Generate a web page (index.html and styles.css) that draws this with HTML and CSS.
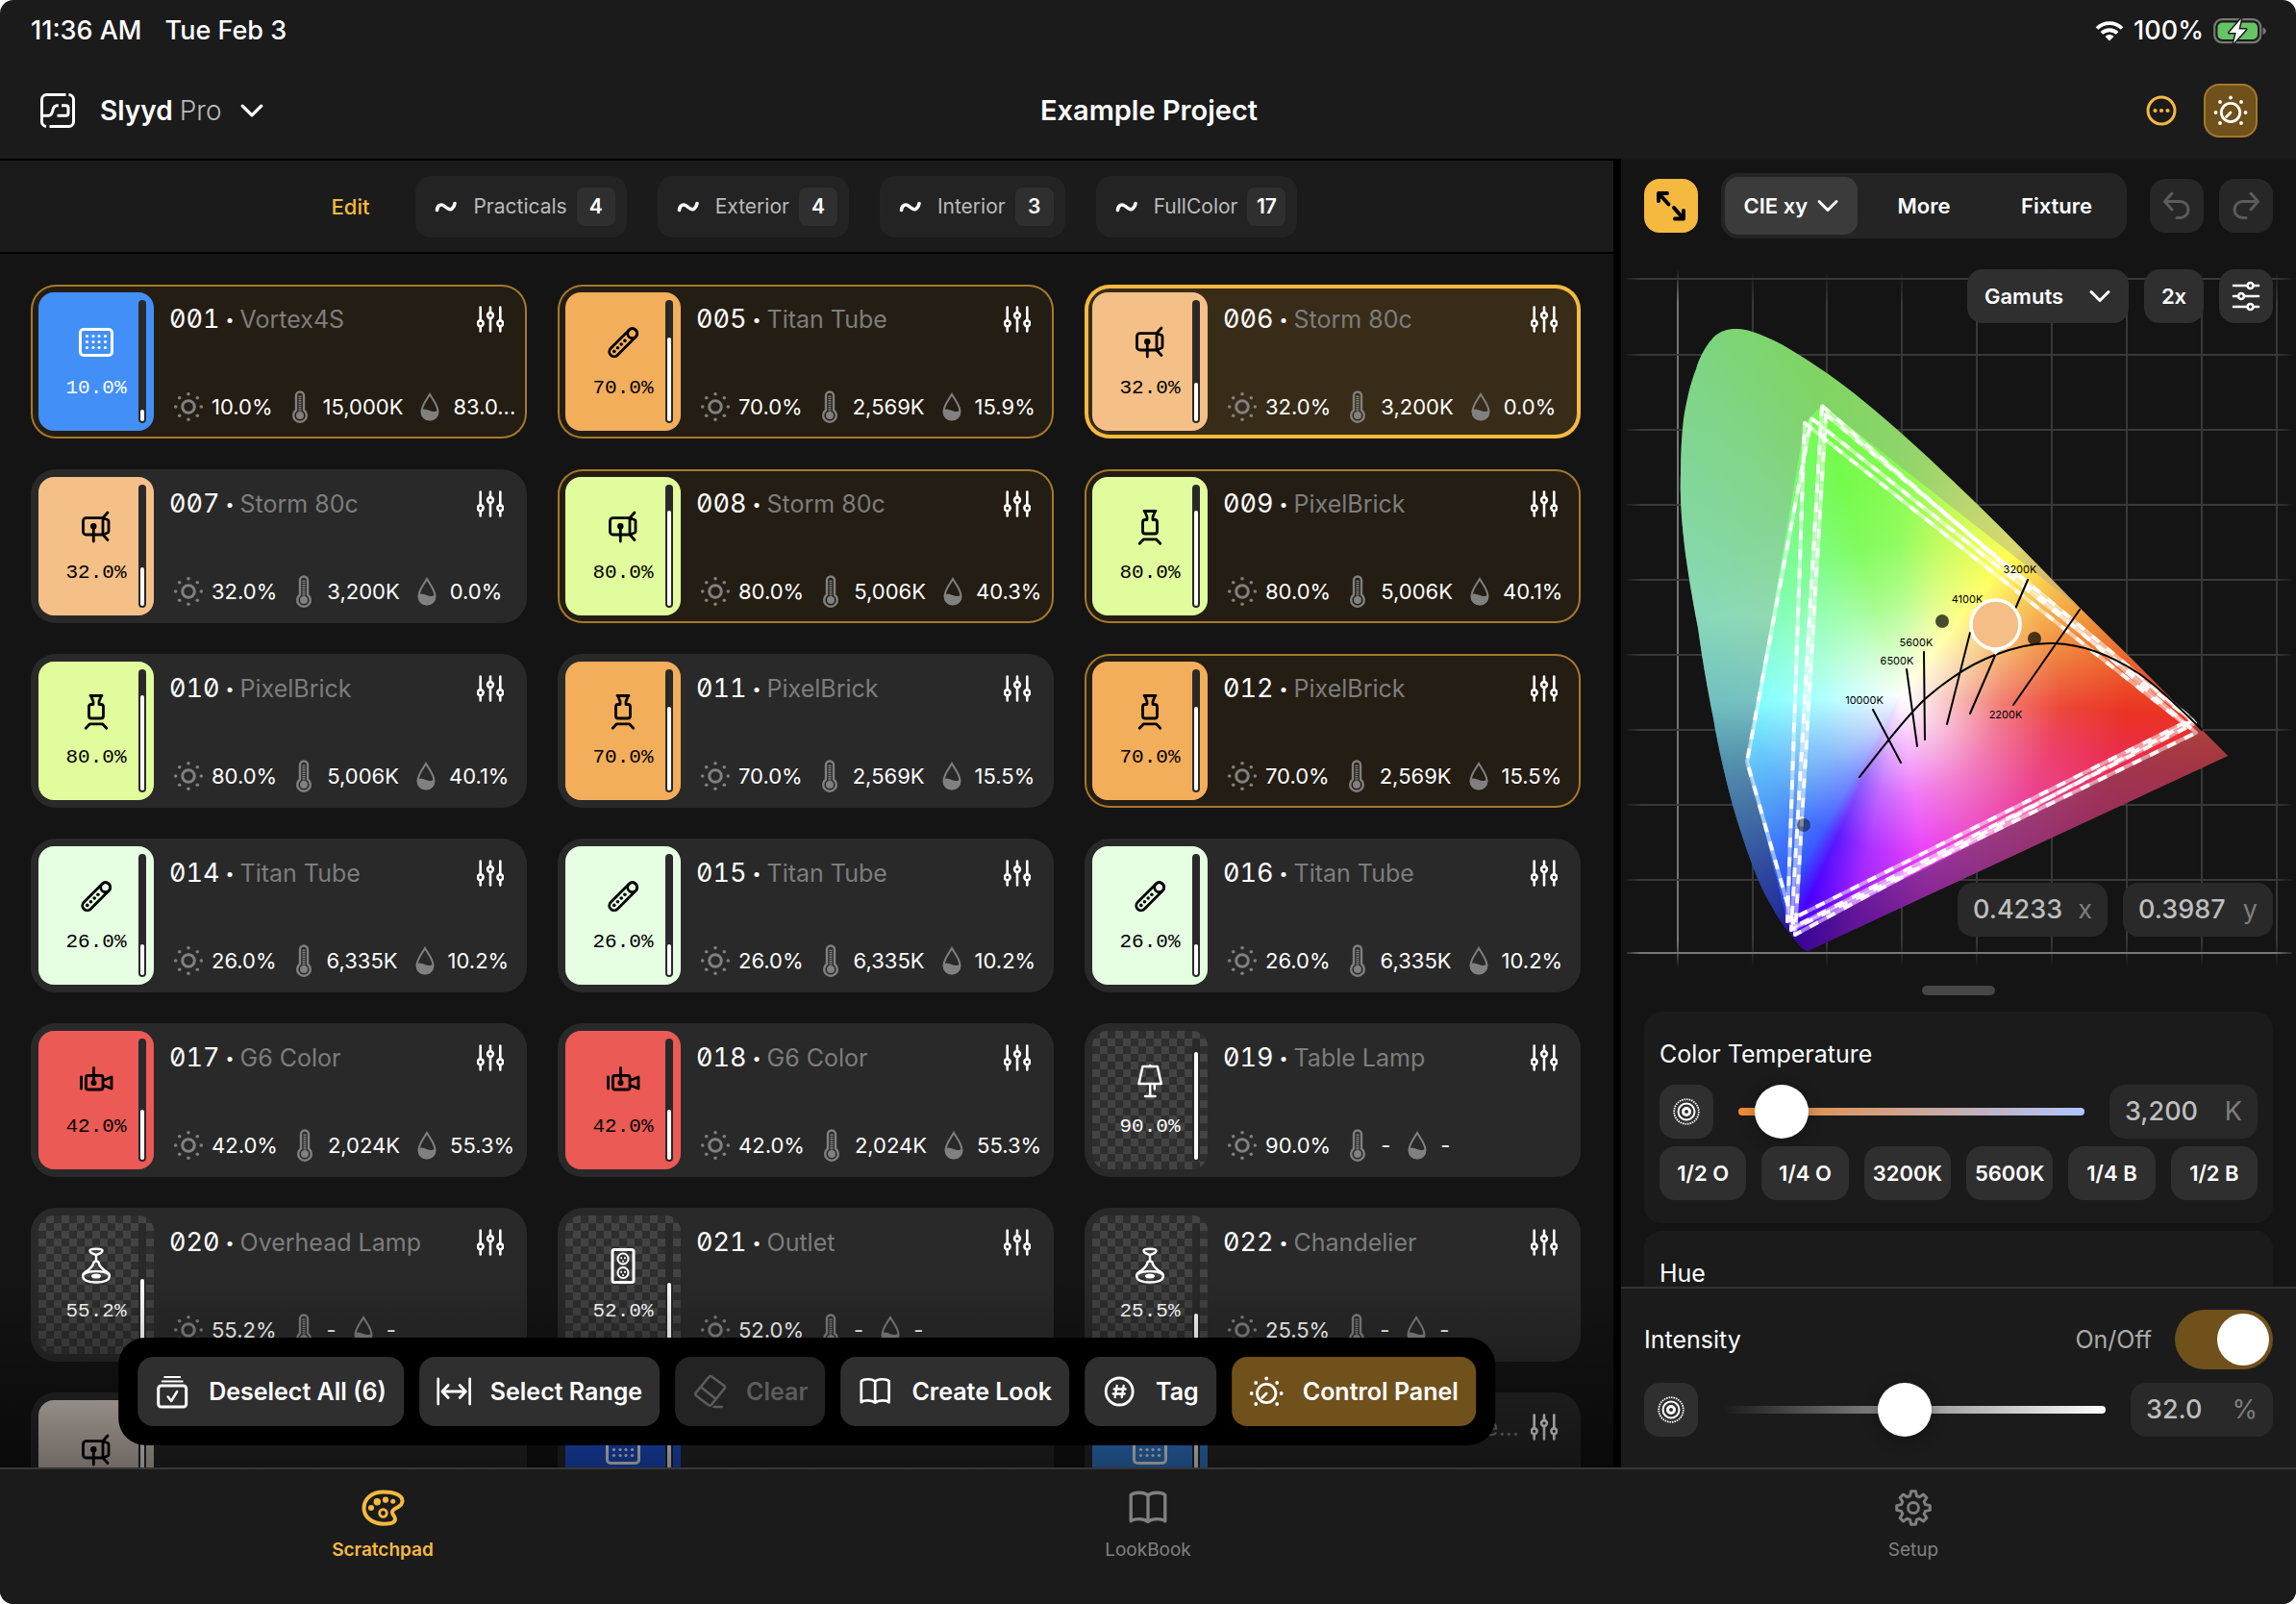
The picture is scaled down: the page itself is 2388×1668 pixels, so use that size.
FILE: index.html
```html
<!DOCTYPE html>
<html lang="en">
<head>
<meta charset="utf-8">
<title>Slyyd Pro – Example Project</title>
<meta name="viewport" content="width=device-width, initial-scale=1">
<link rel="stylesheet" href="styles.css">
</head>
<body>
<svg class="sprite" aria-hidden="true">
  <defs>
    <symbol id="board" viewBox="0 0 40 40"><rect x="3.5" y="6.5" width="33" height="27" rx="3.5" fill="none" stroke="currentColor" stroke-width="3"/><g fill="currentColor"><circle cx="10.5" cy="13.5" r="1.6"/><circle cx="17" cy="13.5" r="1.6"/><circle cx="23" cy="13.5" r="1.6"/><circle cx="29.5" cy="13.5" r="1.6"/><circle cx="10.5" cy="19.5" r="1.6"/><circle cx="17" cy="19.5" r="1.6"/><circle cx="23" cy="19.5" r="1.6"/><circle cx="29.5" cy="19.5" r="1.6"/><circle cx="10.5" cy="25.5" r="1.6"/><circle cx="17" cy="25.5" r="1.6"/><circle cx="23" cy="25.5" r="1.6"/><circle cx="29.5" cy="25.5" r="1.6"/></g></symbol>
    <symbol id="tube" viewBox="0 0 40 40"><rect x="1.8" y="15.2" width="36.8" height="10" rx="5" transform="rotate(-45 20.2 20.2)" fill="none" stroke="currentColor" stroke-width="2.8"/><circle cx="29.7" cy="10.7" r="5" fill="none" stroke="currentColor" stroke-width="2.8"/><g fill="currentColor"><circle cx="10.8" cy="29.4" r="1.8"/><circle cx="14.5" cy="25.7" r="1.8"/><circle cx="18.2" cy="22" r="1.8"/><circle cx="21.9" cy="18.3" r="1.8"/></g></symbol>
    <symbol id="storm" viewBox="0 0 40 40"><g fill="none" stroke="currentColor" stroke-width="2.8" stroke-linecap="round" stroke-linejoin="round"><path d="M27 10.7H9.5a3 3 0 0 0-3 3V25a3 3 0 0 0 3 3H27zM27 10.7l5 1.8q1 .4 1 1.5v10.500q0 1.100-1 1.500L27 28M27 10.500l5-5.500M27 28l5 5.500M17.300 20v15"/></g><circle cx="17.300" cy="19.200" r="3.200" fill="currentColor"/></symbol>
    <symbol id="brick" viewBox="0 0 40 40"><path d="M14 3.500h12M15 4.500l2 5v3h-2a2.500 2.500 0 0 0-2.500 2.500v9.500a2.500 2.500 0 0 0 2.500 2.500h10a2.500 2.500 0 0 0 2.500-2.500V15a2.500 2.500 0 0 0-2.500-2.500h-2v-3l2-5M9.200 37.300l4.300-4.500h13l4.300 4.500" fill="none" stroke="currentColor" stroke-width="2.800" stroke-linecap="round" stroke-linejoin="round"/></symbol>
    <symbol id="camera" viewBox="0 0 40 40"><g fill="none" stroke="currentColor" stroke-width="2.800" stroke-linecap="round" stroke-linejoin="round"><path d="M4.500 16v12M17.500 6.500V20M11.500 14.500H25a2 2 0 0 1 2 2V27a2 2 0 0 1-2 2H11.500a2 2 0 0 1-2-2V16.500a2 2 0 0 1 2-2zM27.500 19.500l8.500-3.500v12l-8.500-3.500"/></g><circle cx="17.500" cy="22" r="3" fill="currentColor"/></symbol>
    <symbol id="table" viewBox="0 0 40 40"><path d="M12.500 5h15.300l4 18H8.500zM20.200 4v0M20.200 23v13M15 36h10.500M24.800 24v4.500" fill="none" stroke="currentColor" stroke-width="2.500" stroke-linecap="round" stroke-linejoin="round"/></symbol>
    <symbol id="pendant" viewBox="0 0 40 40"><g fill="none" stroke="currentColor" stroke-width="2.500" stroke-linecap="round" stroke-linejoin="round"><path d="M13.500 4.500q0-1.800 6.500-1.800t6.500 1.800q0 2.500-6.500 4.500-6.500-2-6.500-4.500zM20 9v6.500M17.500 17q0-1.500 2.500-1.500t2.500 1.500c1 4.500 5 7.500 9 10 2 1.300 2.700 3 2.200 5C33 35.500 28 37.500 20 37.500S7 35.500 6.300 32c-.5-2 .2-3.700 2.200-5 4-2.500 8-5.500 9-10zM8 28.500c5-3.500 19-3.500 24 0"/></g><ellipse cx="20" cy="31" rx="5" ry="2.500" fill="currentColor"/></symbol>
    <symbol id="outlet" viewBox="0 0 40 40"><g fill="none" stroke="currentColor"><rect x="9" y="3.500" width="22" height="34" rx="2" stroke-width="3"/><circle cx="20" cy="13" r="5.500" stroke-width="2"/><circle cx="20" cy="27.500" r="5.500" stroke-width="2"/></g><path d="M17.300 11.300h1.800v2h-1.800zM21 11.300h1.800v2H21zM19.200 14.600h1.600v2h-1.600zM17.300 25.800h1.800v2h-1.800zM21 25.800h1.800v2H21zM19.200 29.100h1.600v2h-1.600z" fill="currentColor"/></symbol>
    <symbol id="faders" viewBox="0 0 28 28"><g fill="none" stroke="currentColor" stroke-width="2.600" stroke-linecap="round"><path d="M3.700 1.500v13M3.700 22v4.500M14 1.500v4.800M14 14v12.500M24.300 1.500v13M24.300 22v4.500"/><circle cx="3.700" cy="18.300" r="2.900"/><circle cx="14" cy="10" r="2.900"/><circle cx="24.300" cy="18.300" r="2.900"/></g></symbol>
    <symbol id="sun" viewBox="0 0 32 36"><circle cx="16" cy="18" r="6.300" fill="none" stroke="currentColor" stroke-width="3"/><g fill="currentColor"><circle cx="16" cy="4.700" r="1.800"/><circle cx="16" cy="31.300" r="1.800"/><circle cx="2.700" cy="18" r="1.800"/><circle cx="29.300" cy="18" r="1.800"/><circle cx="6.700" cy="8.700" r="1.800"/><circle cx="25.300" cy="8.700" r="1.800"/><circle cx="6.700" cy="27.300" r="1.800"/><circle cx="25.300" cy="27.300" r="1.800"/></g></symbol>
    <symbol id="thermo" viewBox="0 0 32 36"><path d="M12 21.500V6.500a4 4 0 0 1 8 0v15a6.800 6.800 0 1 1-8 0z" fill="none" stroke="currentColor" stroke-width="2.400"/><circle cx="16" cy="27" r="4" fill="currentColor"/><path d="M16 6.500v17" stroke="currentColor" stroke-width="3" stroke-dasharray="1.500 .8"/></symbol>
    <symbol id="drop" viewBox="0 0 32 36"><path d="M16 5c-2.500 4.500-8.500 11.500-8.500 18a8.500 8.500 0 0 0 17 0C24.500 16.500 18.500 9.500 16 5z" fill="none" stroke="currentColor" stroke-width="2"/><path d="M7 21.500c3-2 5.500-1 9 .5s6 1.300 9-.5c1 6-3 10.800-9 10.800S6 27.500 7 21.500z" fill="currentColor"/></symbol>
    <symbol id="knob" viewBox="0 0 36 36"><g fill="none" stroke="currentColor" stroke-width="2.800" stroke-linecap="round"><circle cx="18" cy="20" r="9.700"/><path d="M18 20l-4.500 4.500"/></g><g fill="currentColor"><circle cx="18" cy="4.500" r="1.900"/><circle cx="2.500" cy="20" r="1.900"/><circle cx="33.500" cy="20" r="1.900"/><circle cx="7" cy="9" r="1.900"/><circle cx="29" cy="9" r="1.900"/><circle cx="7" cy="31" r="1.900"/><circle cx="29" cy="31" r="1.900"/></g></symbol>
    <symbol id="rings" viewBox="0 0 32 32"><g fill="none" stroke="currentColor"><circle cx="16" cy="16" r="3.500" stroke-width="3"/><circle cx="16" cy="16" r="8.500" stroke-width="2"/><circle cx="16" cy="16" r="12.800" stroke-width="1.800" stroke-dasharray="1.500 1"/></g></symbol>
    <symbol id="chevron" viewBox="0 0 24 24"><path d="M3 7.500l9 9 9-9" fill="none" stroke="currentColor" stroke-width="3" stroke-linecap="round" stroke-linejoin="round"/></symbol>
    <symbol id="tilde" viewBox="0 0 24 24"><path d="M2.500 15.500C3 10 7 8.500 10.500 11.500s6 4 7.500 2.500c1.500-1.200 2.700-2.500 3-5.500" fill="none" stroke="currentColor" stroke-width="3.600" stroke-linecap="round"/></symbol>
    <symbol id="book" viewBox="0 0 40 36"><path d="M20 6.500C17 3 7 3 4 6v24.500c3-2.800 12-2.800 16 .5 4-3.300 13-3.300 16-.5V6C33 3 23 3 20 6.500zM20 6.500V31" fill="none" stroke="currentColor" stroke-width="3" stroke-linecap="round" stroke-linejoin="round"/></symbol>
  </defs>
</svg>

<div class="app">
  <div class="status">
    <div class="status-left"><span>11:36 AM</span><span>Tue Feb 3</span></div>
    <div class="status-right">
      <svg width="30" height="22" viewBox="0 0 30 22" aria-label="Wi-Fi"><g fill="none" stroke="#fff" stroke-width="3.800"><path d="M2 8.500a18.500 18.500 0 0 1 26 0M7 13.500a11.500 11.500 0 0 1 16 0"/></g><path d="M15 21.500l-4.500-4.600a6.500 6.500 0 0 1 9 0z" fill="#fff"/></svg>
      <span>100%</span>
      <svg width="56" height="30" viewBox="0 0 56 30" aria-label="Battery charging"><rect x="1.200" y="3.200" width="48" height="24" rx="8" fill="none" stroke="#777" stroke-width="2.200"/><rect x="4.500" y="6.500" width="41.500" height="17.500" rx="5" fill="#65c466"/><path d="M51.500 11.500v7.500c2-.5 3.300-2 3.300-3.700s-1.300-3.300-3.300-3.800z" fill="#777"/><path d="M29 2.500L16.500 17h7.300L21 28 34 13.500h-7.500z" fill="#fff" stroke="#1b1b1b" stroke-width="3" stroke-linejoin="round" paint-order="stroke"/></svg>
    </div>
  </div>

  <header class="header">
    <button class="brand" type="button">
      <svg width="36" height="36" viewBox="0 0 36 36" fill="none" stroke="currentColor" stroke-width="3"><path d="M26.500 1.500H6.500a5 5 0 0 0-5 5v23a5 5 0 0 0 4.500 5M29.500 1.500a5 5 0 0 1 5 5v23a5 5 0 0 1-5 5H9.500M1 23.300h7.500c2.500 0 3.500-1.500 4.300-5.300s2-5.200 4.500-5.200h1.500M22 12.800h4.500a2.500 2.500 0 0 1 2.500 2.500v5.500a2.500 2.500 0 0 1-2.500 2.500H17.500"/></svg>
      <span class="brand-name">Slyyd <span>Pro</span></span>
      <svg width="26" height="26"><use href="#chevron"/></svg>
    </button>
    <h1>Example Project</h1>
    <div class="header-actions">
      <button class="more" type="button" aria-label="More options"><svg width="32" height="32" viewBox="0 0 32 32"><circle cx="16" cy="16" r="14" fill="none" stroke="currentColor" stroke-width="3"/><g fill="currentColor"><circle cx="9.500" cy="16" r="2.100"/><circle cx="16" cy="16" r="2.100"/><circle cx="22.500" cy="16" r="2.100"/></g></svg></button>
      <button class="square gold-outline" type="button" aria-label="Control panel"><svg width="36" height="36"><use href="#knob"/></svg></button>
    </div>
  </header>

  <div class="main">
    <main class="scratch">
      <div class="filters">
        <button class="edit" type="button">Edit</button>
        <button class="chip" type="button"><svg width="24" height="24"><use href="#tilde"/></svg><span>Practicals</span><b>4</b></button>
        <button class="chip" type="button"><svg width="24" height="24"><use href="#tilde"/></svg><span>Exterior</span><b>4</b></button>
        <button class="chip" type="button"><svg width="24" height="24"><use href="#tilde"/></svg><span>Interior</span><b>3</b></button>
        <button class="chip" type="button"><svg width="24" height="24"><use href="#tilde"/></svg><span>FullColor</span><b>17</b></button>
      </div>

      <div class="list">
        <div class="cards">
          <article class="card picked"><div class="swatch blue"><svg><use href="#board"/></svg><span>10.0%</span><div class="meter"><i style="height:10%"></i></div></div><div class="info"><h2><b>001</b><em>•</em><span>Vortex4S</span><button type="button" aria-label="Adjust"><svg><use href="#faders"/></svg></button></h2><ul><li><svg><use href="#sun"/></svg><span>10.0%</span></li><li><svg><use href="#thermo"/></svg><span>15,000K</span></li><li><svg><use href="#drop"/></svg><span>83.0...</span></li></ul></div></article>
          <article class="card picked"><div class="swatch amber"><svg><use href="#tube"/></svg><span>70.0%</span><div class="meter"><i style="height:70%"></i></div></div><div class="info"><h2><b>005</b><em>•</em><span>Titan Tube</span><button type="button" aria-label="Adjust"><svg><use href="#faders"/></svg></button></h2><ul><li><svg><use href="#sun"/></svg><span>70.0%</span></li><li><svg><use href="#thermo"/></svg><span>2,569K</span></li><li><svg><use href="#drop"/></svg><span>15.9%</span></li></ul></div></article>
          <article class="card active"><div class="swatch peach"><svg><use href="#storm"/></svg><span>32.0%</span><div class="meter"><i style="height:32%"></i></div></div><div class="info"><h2><b>006</b><em>•</em><span>Storm 80c</span><button type="button" aria-label="Adjust"><svg><use href="#faders"/></svg></button></h2><ul><li><svg><use href="#sun"/></svg><span>32.0%</span></li><li><svg><use href="#thermo"/></svg><span>3,200K</span></li><li><svg><use href="#drop"/></svg><span>0.0%</span></li></ul></div></article>

          <article class="card"><div class="swatch peach"><svg><use href="#storm"/></svg><span>32.0%</span><div class="meter"><i style="height:32%"></i></div></div><div class="info"><h2><b>007</b><em>•</em><span>Storm 80c</span><button type="button" aria-label="Adjust"><svg><use href="#faders"/></svg></button></h2><ul><li><svg><use href="#sun"/></svg><span>32.0%</span></li><li><svg><use href="#thermo"/></svg><span>3,200K</span></li><li><svg><use href="#drop"/></svg><span>0.0%</span></li></ul></div></article>
          <article class="card picked"><div class="swatch lime"><svg><use href="#storm"/></svg><span>80.0%</span><div class="meter"><i style="height:80%"></i></div></div><div class="info"><h2><b>008</b><em>•</em><span>Storm 80c</span><button type="button" aria-label="Adjust"><svg><use href="#faders"/></svg></button></h2><ul><li><svg><use href="#sun"/></svg><span>80.0%</span></li><li><svg><use href="#thermo"/></svg><span>5,006K</span></li><li><svg><use href="#drop"/></svg><span>40.3%</span></li></ul></div></article>
          <article class="card picked"><div class="swatch lime"><svg><use href="#brick"/></svg><span>80.0%</span><div class="meter"><i style="height:80%"></i></div></div><div class="info"><h2><b>009</b><em>•</em><span>PixelBrick</span><button type="button" aria-label="Adjust"><svg><use href="#faders"/></svg></button></h2><ul><li><svg><use href="#sun"/></svg><span>80.0%</span></li><li><svg><use href="#thermo"/></svg><span>5,006K</span></li><li><svg><use href="#drop"/></svg><span>40.1%</span></li></ul></div></article>

          <article class="card"><div class="swatch lime"><svg><use href="#brick"/></svg><span>80.0%</span><div class="meter"><i style="height:80%"></i></div></div><div class="info"><h2><b>010</b><em>•</em><span>PixelBrick</span><button type="button" aria-label="Adjust"><svg><use href="#faders"/></svg></button></h2><ul><li><svg><use href="#sun"/></svg><span>80.0%</span></li><li><svg><use href="#thermo"/></svg><span>5,006K</span></li><li><svg><use href="#drop"/></svg><span>40.1%</span></li></ul></div></article>
          <article class="card"><div class="swatch amber"><svg><use href="#brick"/></svg><span>70.0%</span><div class="meter"><i style="height:70%"></i></div></div><div class="info"><h2><b>011</b><em>•</em><span>PixelBrick</span><button type="button" aria-label="Adjust"><svg><use href="#faders"/></svg></button></h2><ul><li><svg><use href="#sun"/></svg><span>70.0%</span></li><li><svg><use href="#thermo"/></svg><span>2,569K</span></li><li><svg><use href="#drop"/></svg><span>15.5%</span></li></ul></div></article>
          <article class="card picked"><div class="swatch amber"><svg><use href="#brick"/></svg><span>70.0%</span><div class="meter"><i style="height:70%"></i></div></div><div class="info"><h2><b>012</b><em>•</em><span>PixelBrick</span><button type="button" aria-label="Adjust"><svg><use href="#faders"/></svg></button></h2><ul><li><svg><use href="#sun"/></svg><span>70.0%</span></li><li><svg><use href="#thermo"/></svg><span>2,569K</span></li><li><svg><use href="#drop"/></svg><span>15.5%</span></li></ul></div></article>

          <article class="card"><div class="swatch mint"><svg><use href="#tube"/></svg><span>26.0%</span><div class="meter"><i style="height:26%"></i></div></div><div class="info"><h2><b>014</b><em>•</em><span>Titan Tube</span><button type="button" aria-label="Adjust"><svg><use href="#faders"/></svg></button></h2><ul><li><svg><use href="#sun"/></svg><span>26.0%</span></li><li><svg><use href="#thermo"/></svg><span>6,335K</span></li><li><svg><use href="#drop"/></svg><span>10.2%</span></li></ul></div></article>
          <article class="card"><div class="swatch mint"><svg><use href="#tube"/></svg><span>26.0%</span><div class="meter"><i style="height:26%"></i></div></div><div class="info"><h2><b>015</b><em>•</em><span>Titan Tube</span><button type="button" aria-label="Adjust"><svg><use href="#faders"/></svg></button></h2><ul><li><svg><use href="#sun"/></svg><span>26.0%</span></li><li><svg><use href="#thermo"/></svg><span>6,335K</span></li><li><svg><use href="#drop"/></svg><span>10.2%</span></li></ul></div></article>
          <article class="card"><div class="swatch mint"><svg><use href="#tube"/></svg><span>26.0%</span><div class="meter"><i style="height:26%"></i></div></div><div class="info"><h2><b>016</b><em>•</em><span>Titan Tube</span><button type="button" aria-label="Adjust"><svg><use href="#faders"/></svg></button></h2><ul><li><svg><use href="#sun"/></svg><span>26.0%</span></li><li><svg><use href="#thermo"/></svg><span>6,335K</span></li><li><svg><use href="#drop"/></svg><span>10.2%</span></li></ul></div></article>

          <article class="card"><div class="swatch red"><svg><use href="#camera"/></svg><span>42.0%</span><div class="meter"><i style="height:42%"></i></div></div><div class="info"><h2><b>017</b><em>•</em><span>G6 Color</span><button type="button" aria-label="Adjust"><svg><use href="#faders"/></svg></button></h2><ul><li><svg><use href="#sun"/></svg><span>42.0%</span></li><li><svg><use href="#thermo"/></svg><span>2,024K</span></li><li><svg><use href="#drop"/></svg><span>55.3%</span></li></ul></div></article>
          <article class="card"><div class="swatch red"><svg><use href="#camera"/></svg><span>42.0%</span><div class="meter"><i style="height:42%"></i></div></div><div class="info"><h2><b>018</b><em>•</em><span>G6 Color</span><button type="button" aria-label="Adjust"><svg><use href="#faders"/></svg></button></h2><ul><li><svg><use href="#sun"/></svg><span>42.0%</span></li><li><svg><use href="#thermo"/></svg><span>2,024K</span></li><li><svg><use href="#drop"/></svg><span>55.3%</span></li></ul></div></article>
          <article class="card"><div class="swatch none"><svg><use href="#table"/></svg><span>90.0%</span><div class="meter"><i style="height:90%"></i></div></div><div class="info"><h2><b>019</b><em>•</em><span>Table Lamp</span><button type="button" aria-label="Adjust"><svg><use href="#faders"/></svg></button></h2><ul><li><svg><use href="#sun"/></svg><span>90.0%</span></li><li><svg><use href="#thermo"/></svg><span>-</span></li><li><svg><use href="#drop"/></svg><span>-</span></li></ul></div></article>

          <article class="card"><div class="swatch none"><svg><use href="#pendant"/></svg><span>55.2%</span><div class="meter"><i style="height:55%"></i></div></div><div class="info"><h2><b>020</b><em>•</em><span>Overhead Lamp</span><button type="button" aria-label="Adjust"><svg><use href="#faders"/></svg></button></h2><ul><li><svg><use href="#sun"/></svg><span>55.2%</span></li><li><svg><use href="#thermo"/></svg><span>-</span></li><li><svg><use href="#drop"/></svg><span>-</span></li></ul></div></article>
          <article class="card"><div class="swatch none"><svg><use href="#outlet"/></svg><span>52.0%</span><div class="meter"><i style="height:52%"></i></div></div><div class="info"><h2><b>021</b><em>•</em><span>Outlet</span><button type="button" aria-label="Adjust"><svg><use href="#faders"/></svg></button></h2><ul><li><svg><use href="#sun"/></svg><span>52.0%</span></li><li><svg><use href="#thermo"/></svg><span>-</span></li><li><svg><use href="#drop"/></svg><span>-</span></li></ul></div></article>
          <article class="card"><div class="swatch none"><svg><use href="#pendant"/></svg><span>25.5%</span><div class="meter"><i style="height:26%"></i></div></div><div class="info"><h2><b>022</b><em>•</em><span>Chandelier</span><button type="button" aria-label="Adjust"><svg><use href="#faders"/></svg></button></h2><ul><li><svg><use href="#sun"/></svg><span>25.5%</span></li><li><svg><use href="#thermo"/></svg><span>-</span></li><li><svg><use href="#drop"/></svg><span>-</span></li></ul></div></article>

          <article class="card"><div class="swatch sand"><svg><use href="#storm"/></svg><div class="meter"><i style="height:90%"></i></div></div></article>
          <article class="card"><div class="swatch navy"><svg><use href="#board"/></svg><div class="meter"><i style="height:90%"></i></div></div></article>
          <article class="card"><div class="swatch azure"><svg><use href="#board"/></svg><div class="meter"><i style="height:90%"></i></div></div><div class="info"><h2><b>025</b><em>•</em><span>Vortex8 Soft Panel Light Array</span><button type="button" aria-label="Adjust"><svg><use href="#faders"/></svg></button></h2></div></article>
        </div>

        <div class="toolbar">
          <button type="button"><svg width="36" height="40" viewBox="0 0 36 40"><g fill="none" stroke="currentColor" stroke-width="3" stroke-linecap="round" stroke-linejoin="round"><rect x="3.500" y="14" width="29" height="22" rx="3"/><path d="M13.500 25.500l3.500 4.500 6-10" stroke-width="2.500"/><path d="M7.500 9.500h21M10 5h16" stroke-width="2"/></g></svg>Deselect All (6)</button>
          <button type="button"><svg width="36" height="36" viewBox="0 0 36 36"><path d="M1.500 5v26M34.500 5v26M6 18h24M12 11.500L5.800 18l6.200 6.500M24 11.500l6.200 6.500-6.200 6.500" fill="none" stroke="currentColor" stroke-width="2.800" stroke-linecap="round" stroke-linejoin="round"/></svg>Select Range</button>
          <button type="button" disabled><svg width="36" height="36" viewBox="0 0 36 36"><path d="M20 2.500l13 9.500q1.500 1 .5 2.500L20 31.500q-1.500 1.800-3.500.5L4 22.500q-1.500-1.300-.5-3L17 3q1.300-1.700 3-.5zM9 13.500l15 12M22.500 34h8" fill="none" stroke="currentColor" stroke-width="2.600" stroke-linecap="round"/></svg>Clear</button>
          <button type="button"><svg width="36" height="36"><use href="#book"/></svg>Create Look</button>
          <button type="button"><svg width="36" height="36" viewBox="0 0 36 36"><g fill="none" stroke="currentColor" stroke-width="2.800" stroke-linecap="round"><circle cx="18" cy="18" r="14"/><path d="M15.500 12l-2 12M22.500 12l-2 12M12.500 15.500h12M11.500 20.500h12" stroke-width="2.300"/></g></svg>Tag</button>
          <button class="gold" type="button"><svg width="36" height="36"><use href="#knob"/></svg>Control Panel</button>
        </div>
      </div>
    </main>

    <aside class="panel">
      <div class="modes">
        <button class="square accent" type="button" aria-label="Expand"><svg width="32" height="40" viewBox="0 0 32 40"><g fill="none" stroke="currentColor" stroke-width="4" stroke-linecap="round" stroke-linejoin="round"><path d="M3 15V7h9M4 8l9.500 10.500M29 25v8.500h-9M28 32.500L19 22"/></g></svg></button>
        <div class="segments">
          <label class="seg seg-on"><select aria-label="Color space"><option>CIE xy</option></select><svg width="24" height="24"><use href="#chevron"/></svg></label>
          <button class="seg" type="button">More</button>
          <button class="seg" type="button">Fixture</button>
        </div>
        <div class="history">
          <button class="square" type="button" disabled aria-label="Undo"><svg width="32" height="32" viewBox="0 0 32 32"><path d="M11 3L3.500 11.500 11 20M4 11.500h15.500a8.500 8.500 0 0 1 8.500 8.500v0a8.500 8.500 0 0 1-8.500 8.500H16" fill="none" stroke="currentColor" stroke-width="3" stroke-linecap="round" stroke-linejoin="round"/></svg></button>
          <button class="square" type="button" disabled aria-label="Redo"><svg width="32" height="32" viewBox="0 0 32 32"><path d="M21 3l7.500 8.500L21 20M28 11.500H12.500A8.500 8.500 0 0 0 4 20v0a8.500 8.500 0 0 0 8.500 8.500H16" fill="none" stroke="currentColor" stroke-width="3" stroke-linecap="round" stroke-linejoin="round"/></svg></button>
        </div>
      </div>

      <section class="chart" aria-label="Chromaticity diagram">
        <svg class="plot" viewBox="0 0 702 736">
          <defs>
            <linearGradient id="fadeX"><stop offset="0" stop-color="#000"/><stop offset=".03" stop-color="#fff"/><stop offset=".97" stop-color="#fff"/><stop offset="1" stop-color="#000"/></linearGradient>
            <linearGradient id="fadeY" x2="0" y2="1"><stop offset=".01" stop-color="#000"/><stop offset=".06" stop-color="#fff"/><stop offset=".96" stop-color="#fff"/><stop offset="1" stop-color="#000"/></linearGradient>
            <mask id="maskX" maskUnits="userSpaceOnUse" x="0" y="0" width="702" height="736"><rect width="702" height="736" fill="url(#fadeX)"/></mask>
            <mask id="maskY" maskUnits="userSpaceOnUse" x="0" y="0" width="702" height="736"><rect width="702" height="736" fill="url(#fadeY)"/></mask>
            <clipPath id="locus"><path d="M194 717C189 716 182 707 175 698C169 691 163 682 157 671C149 658 142 642 136 626C129 607 122 586 116 565C108 535 101 505 96 475C89 440 84 410 80 381C74 350 69 320 66 296C63 270 61 245 62 220C62 200 63 182 65 164C68 145 72 127 78 112C82 98 89 87 96 79C103 72 111 70 120 70C130 70 141 74 152 79C173 88 193 102 214 116C240 134 266 156 292 179C318 202 344 227 369 251C406 287 441 323 477 360L536 418L631 514Z"/></clipPath>
            <linearGradient id="dim" x2="0" y2="1"><stop offset="0" stop-color="#8a7a88" stop-opacity=".3"/><stop offset=".5" stop-color="#a5a5a5" stop-opacity=".42"/><stop offset=".7" stop-color="#444" stop-opacity=".42"/><stop offset="1" stop-color="#102" stop-opacity=".5"/></linearGradient>
          </defs>
          <g mask="url(#maskY)" stroke="#383838" stroke-width="2"><path d="M137 6V736M214 6V736M292 6V736M370 6V736M448 6V736M526 6V736M604 6V736M682 6V736"/><path d="M59 6V736" stroke="#777"/></g>
          <g mask="url(#maskX)" stroke="#383838" stroke-width="2"><path d="M6 18H698M6 97H698M6 175H698M6 253H698M6 331H698M6 409H698M6 487H698M6 565H698M6 643H698"/><path d="M6 719H698" stroke="#777"/></g>
          <g clip-path="url(#locus)">
            <foreignObject width="702" height="736"><div class="spectrum"></div></foreignObject>
            <path fill="url(#dim)" fill-rule="evenodd" d="M0 0H702V736H0ZM209 149L477 360L598 482L594 490L181 700L174 690L131 520L191 168Z"/>
          </g>
          <g class="gamut"><path d="M198 163L597 480L180 692L131 520Z"/><path d="M213 159L595 477L181 700Z"/><path d="M209 150L598 490L177 695Z"/><path d="M191 168L585 480L173 686Z"/></g>
          <g class="gamut dashed"><path d="M198 163L597 480L180 692L131 520Z"/><path d="M213 159L595 477L181 700Z"/><path d="M209 150L598 490L177 695Z"/><path d="M191 168L585 480L173 686Z"/></g>
          <path d="M248 536C270 508 292 478 316 455C340 434 365 418 389 409C412 400 430 396 450 397C485 398 515 413 538 428C560 443 585 468 604 487M262 466L291 521M297 424L308 504M315 406L316 497M363 386L339 481M423 331L363 470M477 362L408 461" fill="none" stroke="#000" stroke-width="2" stroke-linecap="round"/>
          <g class="kelvins"><text x="415" y="324">3200K</text><text x="360" y="355">4100K</text><text x="307" y="400">5600K</text><text x="287" y="419">6500K</text><text x="253" y="460">10000K</text><text x="400" y="475">2200K</text></g>
          <g fill="#000"><circle cx="334" cy="374" r="7" opacity=".7"/><circle cx="430" cy="392" r="7" opacity=".7"/><circle cx="190" cy="586" r="7" opacity=".45"/></g>
          <path d="M382 402h15l-7.500 7z" fill="#fff"/><circle cx="389.500" cy="377.500" r="25.500" fill="#f4be86" stroke="#fff" stroke-width="3.500"/>
        </svg>
        <div class="chart-tools">
          <label class="drop"><select aria-label="Gamuts"><option>Gamuts</option></select><svg width="24" height="24"><use href="#chevron"/></svg></label>
          <button class="square zoom" type="button">2x</button>
          <button class="square" type="button" aria-label="Chart options"><svg width="32" height="32" viewBox="0 0 32 32"><g fill="none" stroke="currentColor" stroke-width="2.700" stroke-linecap="round"><path d="M3 5h13M25 5h4M3 16h4M15 16h14M3 27h13M25 27h4"/><circle cx="20.500" cy="5" r="3"/><circle cx="11" cy="16" r="3"/><circle cx="20.500" cy="27" r="3"/></g></svg></button>
        </div>
        <div class="chart-fields">
          <label class="field xy"><input type="text" value="0.4233"><span>x</span></label>
          <label class="field xy"><input type="text" value="0.3987"><span>y</span></label>
        </div>
      </section>

      <div class="handle"></div>

      <div class="controls">
        <section class="control">
          <h3><label for="cct">Color Temperature</label></h3>
          <div class="row">
            <button class="square" type="button" aria-label="Fine color temperature"><svg width="32" height="32"><use href="#rings"/></svg></button>
            <input class="range warm" id="cct" type="range" min="2500" max="15000" value="3200">
            <label class="field kelvin"><input type="text" value="3,200" aria-label="Kelvin"><span>K</span></label>
          </div>
          <div class="presets"><button type="button">1/2 O</button><button type="button">1/4 O</button><button type="button">3200K</button><button type="button">5600K</button><button type="button">1/4 B</button><button type="button">1/2 B</button></div>
        </section>
        <section class="control"><h3>Hue</h3></section>
      </div>

      <section class="intensity">
        <div class="row between"><h3><label for="level">Intensity</label></h3><label class="power">On/Off<input type="checkbox" role="switch" checked></label></div>
        <div class="row">
          <button class="square" type="button" aria-label="Fine intensity"><svg width="32" height="32"><use href="#rings"/></svg></button>
          <input class="range grey" id="level" type="range" min="0" max="100" value="47">
          <label class="field percent"><input type="text" value="32.0" aria-label="Percent"><span>%</span></label>
        </div>
      </section>
    </aside>
  </div>

  <nav class="tabs">
    <a class="current" href="#scratchpad"><svg width="48" height="40" viewBox="0 0 48 40"><path d="M25 3.500C12 3.500 4.500 11 4.500 20.500 4.500 30 14 36.700 25 36.700c6 0 12-1 12-5.200 0-3.200-3-3.500-3-7 0-4.700 10.500-4.500 10.500-11.500C44.500 6.500 36 3.500 25 3.500z" fill="none" stroke="currentColor" stroke-width="4"/><circle cx="24.500" cy="25.500" r="3.800" fill="none" stroke="currentColor" stroke-width="2.800"/><g fill="currentColor"><circle cx="12" cy="20" r="3"/><circle cx="18.300" cy="13.700" r="3.700"/><circle cx="27" cy="11.700" r="3.100"/><circle cx="34.700" cy="13.200" r="2.500"/></g></svg>Scratchpad</a>
    <a href="#lookbook"><svg width="48" height="40" viewBox="0 0 40 36"><use href="#book" width="40" height="36"/></svg>LookBook</a>
    <a href="#setup"><svg width="48" height="40" viewBox="-24 -20 48 40"><path d="M-3.400-12.500L-2.400-17.300 2.400-17.300 3.400-12.500 6.400-11.200 10.500-13.900 13.900-10.500 11.200-6.400 12.500-3.400 17.300-2.400 17.300 2.400 12.500 3.400 11.200 6.400 13.900 10.500 10.500 13.900 6.400 11.200 3.400 12.500 2.400 17.300-2.400 17.300-3.400 12.500-6.400 11.200-10.500 13.900-13.900 10.500-11.200 6.400-12.500 3.400-17.300 2.400-17.300-2.400-12.500-3.400-11.200-6.400-13.900-10.500-10.500-13.900-6.400-11.200z" fill="none" stroke="currentColor" stroke-width="3" stroke-linejoin="round"/><circle r="5.500" fill="none" stroke="currentColor" stroke-width="2.800"/></svg>Setup</a>
  </nav>
</div>
</body>
</html>
```
FILE: styles.css
```css
* { box-sizing: border-box; margin: 0; padding: 0; }

:root {
  --bar: #1b1b1b;
  --bg: #141414;
  --card: #292929;
  --button: #2f2f2f;
  --gold: #f5b93f;
  --gold-deep: #70511c;
  --gold-line: #a6792a;
}

body { background: #fff; color: #fff; font: 24px/32px Inter, "Liberation Sans", sans-serif; }
button, input, select { font: inherit; color: inherit; background: none; border: 0; outline: 0; appearance: none; }
h1, h2, h3 { font-weight: 400; }
ul { list-style: none; }
svg { display: block; flex: none; }
.sprite { position: absolute; width: 0; height: 0; }

.app { display: flex; flex-direction: column; height: 100vh; overflow: hidden; background: var(--bar); border-radius: 14px; }

/* status bar */
.status { display: flex; justify-content: space-between; align-items: center; height: 64px; padding: 0 30px 0 32px; font-size: 27px; font-weight: 500; }
.status-left { display: flex; gap: 24px; }
.status-right { display: flex; align-items: center; gap: 10px; }

/* header */
.header { display: grid; grid-template-columns: 1fr auto 1fr; align-items: center; height: 101px; padding: 0 40px 0 42px; }
.header h1 { font-size: 29px; font-weight: 600; }
.brand { display: flex; align-items: center; gap: 18px; font-size: 28px; justify-self: start; }
.brand-name { padding-left: 8px; font-weight: 600; }
.brand-name span { font-weight: 300; color: #bbb; }
.header-actions { display: flex; align-items: center; justify-content: flex-end; gap: 28px; }
.more { color: var(--gold); }

.square { display: grid; place-items: center; flex: none; width: 56px; height: 56px; border-radius: 16px; background: var(--button); }
.square:disabled { background: #272727; color: #5c5c5c; }
.square.accent { background: var(--gold); color: #000; }
.square.gold-outline { background: var(--gold-deep); border: 2px solid var(--gold-line); }

/* main split */
.main { flex: 1; min-height: 0; display: grid; grid-template-columns: minmax(0, 1fr) 702px; column-gap: 8px; background: #000; }
.scratch { display: flex; flex-direction: column; min-height: 0; background: var(--bg); }

.filters { display: flex; align-items: center; justify-content: center; gap: 32px; height: 99px; border-top: 2px solid #000; border-bottom: 2px solid #000; background: var(--bar); }
.edit { padding: 0 16px; color: var(--gold); font-size: 22px; font-weight: 500; }
.chip { display: flex; align-items: center; height: 64px; padding: 0 12px 0 20px; border-radius: 16px; background: #232323; font-size: 21px; color: #bbb; }
.chip svg { color: #fff; margin-right: 16px; }
.chip b { min-width: 40px; height: 40px; margin-left: 10px; padding: 0 8px; border-radius: 8px; background: var(--button); color: #fff; font-size: 21px; font-weight: 600; line-height: 40px; text-align: center; }

/* fixture cards */
.list { position: relative; flex: 1; min-height: 0; overflow: hidden; }
.list::after { content: ""; position: absolute; inset: auto 0 0; height: 200px; background: linear-gradient(transparent, rgba(0, 0, 0, .5)); pointer-events: none; }
.cards { display: grid; grid-template-columns: repeat(3, minmax(0, 1fr)); gap: 32px; padding: 32px 34px 0 32px; }
.card { display: flex; height: 160px; padding: 8px; border-radius: 26px; background: var(--card); }
.card.picked { background: #241d13; box-shadow: inset 0 0 0 2px var(--gold-line); }
.card.active { background: #382c18; box-shadow: inset 0 0 0 4px var(--gold); }

.swatch { position: relative; flex: none; display: flex; flex-direction: column; align-items: center; gap: 16px; width: 120px; padding-top: 32px; border-radius: 16px; color: #000; }
.swatch svg { width: 40px; height: 40px; }
.swatch span { font: 21px/24px "Liberation Mono", monospace; }
.meter { position: absolute; top: 8px; right: 8px; bottom: 8px; display: flex; align-items: flex-end; width: 8px; padding: 2px; border-radius: 4px; background: #292929; }
.meter i { width: 4px; border-radius: 2px; background: #fff; }
.blue { background: #4290f7; color: #fff; }
.amber { background: #f3ae5b; }
.peach { background: #f5c087; }
.lime { background: #e1fc9c; }
.mint { background: #e6ffe2; }
.red { background: #eb5a55; }
.sand { background: #dccfc6; }
.navy { background: #1f55e0; color: #fff; }
.azure { background: #3484e0; color: #fff; }
.none { background: repeating-conic-gradient(#434343 0 25%, #2e2e2e 0 50%) 0 0 / 16px 16px; color: #fff; }

.info { flex: 1; min-width: 0; display: flex; flex-direction: column; justify-content: space-between; padding: 12px 0 7px 16px; }
.info h2 { display: flex; align-items: center; gap: 6px; padding-right: 16px; font-size: 25px; line-height: 32px; }
.info h2 b { font-weight: 400; font-size: 27px; font-feature-settings: "tnum", "zero"; }
.info h2 em { font-size: 16px; font-style: normal; }
.info h2 span { flex: 1; overflow: hidden; text-overflow: ellipsis; white-space: nowrap; color: #7d7d7d; }
.info h2 svg { width: 28px; height: 28px; }
.info ul { display: flex; gap: 12px; padding-left: 4px; }
.info li { display: flex; align-items: center; gap: 8px; font-size: 22px; white-space: nowrap; }
.info li svg { width: 32px; height: 36px; color: #808080; }

/* floating actions */
.toolbar { position: absolute; z-index: 1; left: 50%; bottom: 23px; transform: translateX(-50%); display: flex; gap: 16px; padding: 20px; border-radius: 28px; background: #000; }
.toolbar button { display: flex; align-items: center; gap: 20px; height: 72px; padding: 0 18px; border-radius: 16px; background: var(--button); font-size: 25px; font-weight: 600; white-space: nowrap; }
.toolbar button:disabled { background: #232323; color: #5c5c5c; }
.toolbar .gold { background: var(--gold-deep); }

/* side panel */
.panel { display: flex; flex-direction: column; min-height: 0; background: var(--bg); }
.modes { display: flex; align-items: center; justify-content: space-between; padding: 15px 24px 24px; }
.segments { display: grid; grid-template-columns: repeat(3, 1fr); width: 422px; height: 68px; padding: 4px; border-radius: 18px; background: #242424; }
.seg { display: flex; align-items: center; justify-content: center; gap: 8px; border-radius: 14px; font-size: 22px; font-weight: 600; }
.seg-on { background: #3b3b3b; }
.history { display: flex; gap: 16px; }

.chart { position: relative; }
.plot { width: 100%; height: auto; }
.spectrum {
  width: 702px; height: 736px;
  background:
    radial-gradient(circle at 296px 454px, #fff 0, rgba(255, 255, 255, .68) 50px, rgba(255, 255, 255, .36) 100px, rgba(255, 255, 255, .1) 160px, transparent 230px),
    conic-gradient(from 0deg at 290px 452px, #86fc50 0deg, #c8fc50 18deg, #ffff45 38deg, #f5b040 58deg, #f08a30 70deg, #ea3323 94deg, #ea2c50 106deg, #ea3090 130deg, #ea33c0 152deg, #e82cf7 172deg, #a018ff 192deg, #4a00ff 204deg, #2a50ff 210deg, #4090f7 228deg, #55c0fa 246deg, #70ffff 268deg, #74ffb8 300deg, #74fc80 328deg, #75fb4c 345deg, #86fc50 360deg);
}
.gamut { fill: none; stroke: #fff; stroke-width: 4; stroke-opacity: .5; stroke-linejoin: round; }
.gamut.dashed { stroke-opacity: .9; stroke-dasharray: 10 10; }
.kelvins { font-size: 11px; text-anchor: middle; fill: #000; }

.chart-tools, .chart-fields { position: absolute; right: 24px; display: flex; gap: 16px; }
.chart-tools { top: 8px; }
.chart-fields { bottom: 34px; }
.drop { display: flex; align-items: center; justify-content: space-between; width: 168px; height: 56px; padding: 0 18px; border-radius: 16px; background: var(--button); font-size: 22px; font-weight: 600; }
.square.zoom { width: 62px; font-size: 22px; font-weight: 600; }

.field { display: flex; align-items: center; flex: none; height: 56px; padding: 0 16px; border-radius: 16px; background: #292929; color: #7d7d7d; font-size: 27px; }
.field input { flex: 1; min-width: 0; width: 0; color: #bebebe; font-weight: 500; }
.xy { width: 156px; }
.kelvin { width: 154px; }
.percent { width: 148px; }

.handle { align-self: center; width: 76px; height: 10px; margin: 17px 0; border-radius: 5px; background: #464646; }

.controls { flex: 1; min-height: 0; overflow: hidden; display: flex; flex-direction: column; gap: 8px; padding: 0 24px; }
.control { flex: none; padding: 28px 16px 24px; border-radius: 18px; background: var(--bar); }
.control h3 { margin-bottom: 16px; }
.panel h3 { font-size: 25px; }
.row { display: flex; align-items: center; gap: 26px; }
.between { justify-content: space-between; margin-bottom: 14px; }
.presets { display: grid; grid-template-columns: repeat(6, 1fr); gap: 16px; margin-top: 8px; }
.presets button { height: 56px; border-radius: 16px; background: var(--button); font-size: 22px; font-weight: 600; white-space: nowrap; }

.range { flex: 1; min-width: 0; height: 56px; }
.range::-webkit-slider-runnable-track { height: 8px; border-radius: 4px; }
.range::-webkit-slider-thumb { appearance: none; width: 56px; height: 56px; margin-top: -24px; border-radius: 50%; background: #fff; box-shadow: 0 4px 16px rgba(0, 0, 0, .3); }
.warm::-webkit-slider-runnable-track { background: linear-gradient(90deg, #f08b38, #dc965f 25%, #cba89f 55%, #b0c6ff); }
.grey::-webkit-slider-runnable-track { background: linear-gradient(90deg, #1b1b1b, #8a8a8a 45%, #fff); }

.intensity { padding: 22px 24px 32px; border-top: 2px solid #333; background: var(--bar); }
.power { display: flex; align-items: center; gap: 24px; color: #aaa; font-size: 25px; }
.power input { display: flex; width: 102px; height: 62px; padding: 4px; border-radius: 31px; background: var(--gold-deep); }
.power input::before { content: ""; width: 54px; height: 54px; border-radius: 50%; background: #fff; }
.power input:checked { justify-content: flex-end; }

/* bottom navigation */
.tabs { display: grid; grid-template-columns: repeat(3, 1fr); height: 142px; border-top: 2px solid #363636; background: var(--bar); }
.tabs a { display: flex; flex-direction: column; align-items: center; gap: 12px; padding-top: 20px; color: #808080; font-size: 19px; line-height: 24px; text-decoration: none; }
.tabs .current { color: var(--gold); font-weight: 600; }
```
